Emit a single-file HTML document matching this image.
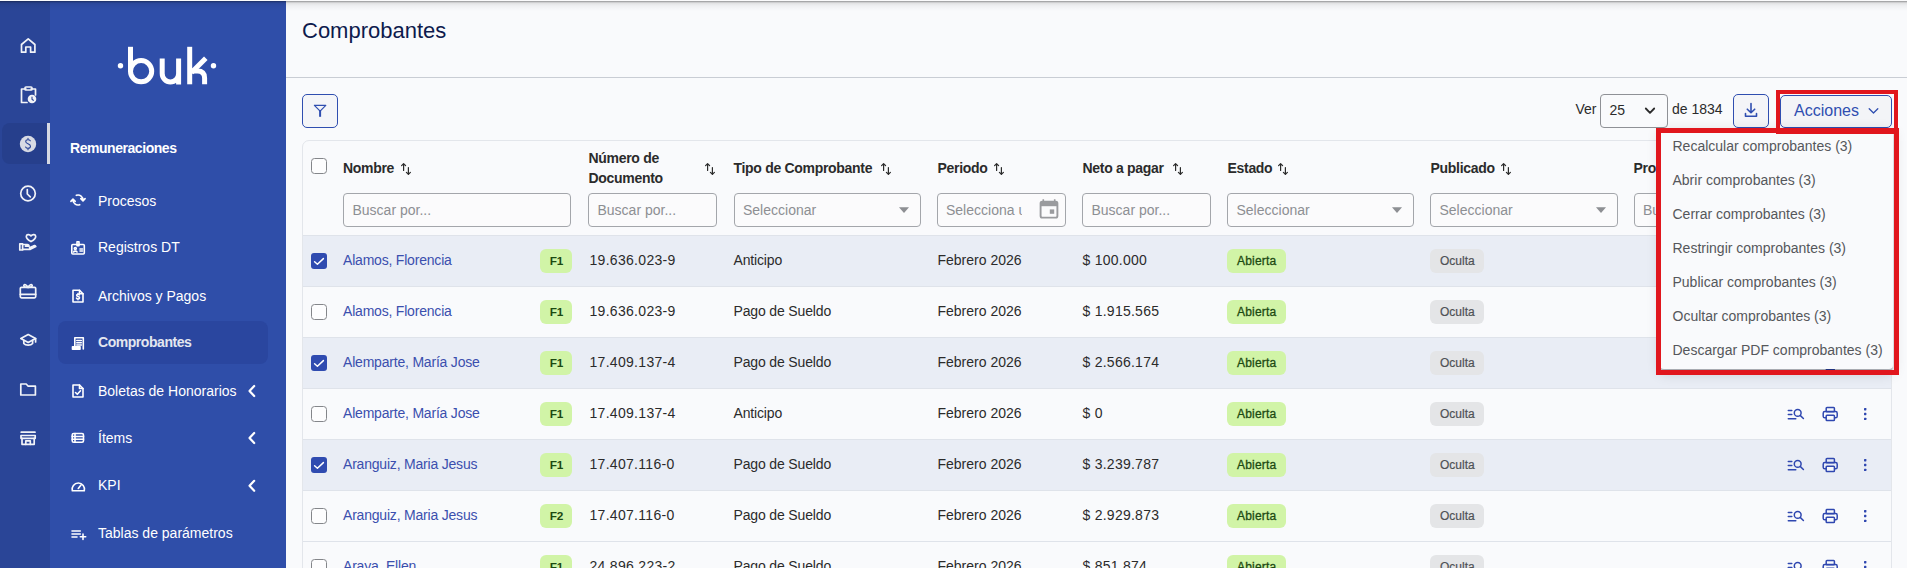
<!DOCTYPE html>
<html><head><meta charset="utf-8">
<style>
*{box-sizing:border-box;margin:0;padding:0}
html,body{width:1907px;height:568px;overflow:hidden}
body{position:relative;background:#f9fafc;font-family:"Liberation Sans",sans-serif;color:#2b2b2b}
.a{position:absolute}
.t{position:absolute;white-space:nowrap;line-height:1}
#rail{left:0;top:0;width:50px;height:568px;background:#2a4597}
#side{left:50px;top:0;width:236px;height:568px;background:#2f4ea9}
#topsh{left:0;top:0;width:1907px;height:12px;background:linear-gradient(to bottom,#fbfbfc 0px,#fbfbfc 0.8px,rgba(0,0,0,.36) 1px,rgba(0,0,0,.3) 2px,rgba(0,0,0,.15) 2.6px,rgba(0,0,0,.09) 3.5px,rgba(0,0,0,.055) 5px,rgba(0,0,0,.03) 7px,rgba(0,0,0,0) 11px)}
.ri{position:absolute;left:20px;width:16px;height:16px}
.si{color:#fff;font-size:14px}
</style></head><body>
<div id="rail" class="a"></div>
<div id="side" class="a"></div>


<!-- rail icons -->
<svg class="a" style="left:0;top:0" width="50" height="568" viewBox="0 0 50 568" fill="none" stroke="#f1f3f8" stroke-width="1.7" stroke-linejoin="round" stroke-linecap="round">
  <!-- home -->
  <path d="M21.5 52.2V44.5L28.2 38.8L34.9 44.5V52.2H30.6V47H25.8V52.2Z"/>
  <!-- clipboard clock -->
  <path d="M26 89H21.5V102.5H27"/><path d="M31 89H35.5V95"/><rect x="25" y="87" width="7" height="3" rx="1"/>
  <circle cx="32" cy="99" r="4.3" fill="#f1f3f8" stroke="none"/><path d="M32 97V99.3L33.3 100.3" stroke="#2a4597" stroke-width="1.1"/>
  <!-- dollar active bg -->
  <path d="M10 123H47V164H10A8 8 0 0 1 2 156V131A8 8 0 0 1 10 123Z" fill="#263f8c" stroke="none"/>
  <rect x="47" y="123" width="3" height="41" fill="#d6d9e2" stroke="none"/>
  <circle cx="28" cy="144" r="8.2" fill="#d8dbe4" stroke="none"/>
  <path d="M30.3 140.8C29.8 140 29 139.7 28 139.7C26.6 139.7 25.7 140.5 25.7 141.6C25.7 144.3 30.5 143.3 30.5 146.3C30.5 147.5 29.4 148.3 28 148.3C26.9 148.3 26 147.8 25.6 147M28 138.2V139.7M28 148.3V149.8" stroke="#2a4597" stroke-width="1.1"/>
  <!-- clock -->
  <circle cx="28" cy="193.5" r="7.3"/><path d="M27.3 189.5V194L30.3 196.8"/>
  <!-- hand heart -->
  <path d="M31 241.6C31 241.6 26.3 238.9 26.3 236.4C26.3 234.5 29.2 233.8 31 235.9C32.8 233.8 35.7 234.5 35.7 236.4C35.7 238.9 31 241.6 31 241.6Z"/>
  <path d="M19.8 243.8H22.6V250H19.8Z"/><path d="M22.6 244.5H27.3C28.4 244.5 29 245.2 29 246.2H25.5M22.6 249.3H30.3L35.8 246.6C35.3 245.6 34.2 245.4 33.3 245.9L29.5 247.7"/>
  <!-- gift -->
  <rect x="20.3" y="287.3" width="15.4" height="10.5" rx="1.2"/><path d="M20.3 294.3H35.7"/><path d="M28 287.5C26.8 284.6 23.8 283.6 23.8 285.6C23.8 287.2 26.3 287.5 28 287.5C29.7 287.5 32.2 287.2 32.2 285.6C32.2 283.6 29.2 284.6 28 287.5Z"/>
  <!-- grad cap -->
  <path d="M20.8 338.5L28.2 334.5L35.6 338.5L28.2 342.5Z"/><path d="M23.8 340.3V343.5C25.5 345.8 30.9 345.8 32.6 343.5V340.3"/><path d="M35.6 338.5V342"/>
  <!-- folder -->
  <path d="M20.8 384H26.2L28.2 386.2H35.4V395H20.8Z"/>
  <!-- store -->
  <path d="M21.2 432.2H35"/><path d="M21 435.5H35.2L35.2 438.3H21Z"/><path d="M22 438.3V444.3H34.2V438.3"/><path d="M25.8 444.3V440.8H30.3V444.3"/>
</svg>

<!-- logo -->
<svg class="a" style="left:50px;top:0" width="236" height="110" viewBox="50 0 236 110" fill="none" stroke="#fff" stroke-width="5">
  <circle cx="120.5" cy="65.8" r="2.7" fill="#fff" stroke="none"/>
  <circle cx="213.5" cy="65.8" r="2.7" fill="#fff" stroke="none"/>
  <path d="M130.5 46.8V72"/><circle cx="141.1" cy="71.2" r="10.6"/>
  <path d="M162.2 58.5V73.5A8.2 8.5 0 0 0 178.6 73.5V58.5M178.6 70V84.5"/>
  <path d="M189.7 46.8V84.3"/><path d="M191.5 72.5L205.8 58.2"/><path d="M191 71H197.5Q204.6 71 204.6 78V84.3"/>
</svg>

<!-- sidebar items -->
<div class="a" style="left:58px;top:321px;width:210px;height:43px;border-radius:8px;background:#2a469f"></div>
<div class="t" style="left:70px;top:141px;font-size:14px;font-weight:bold;color:#fff;letter-spacing:-0.45px">Remuneraciones</div>
<div class="t si" style="left:98px;top:193.5px">Procesos</div>
<div class="t si" style="left:98px;top:240px">Registros DT</div>
<div class="t si" style="left:98px;top:288.5px">Archivos y Pagos</div>
<div class="t si" style="left:98px;top:335.3px;font-weight:bold;color:#e3e6ef;letter-spacing:-0.45px">Comprobantes</div>
<div class="t si" style="left:98px;top:383.5px">Boletas de Honorarios</div>
<div class="t si" style="left:98px;top:431px">Ítems</div>
<div class="t si" style="left:98px;top:478px">KPI</div>
<div class="t si" style="left:98px;top:526px">Tablas de parámetros</div>
<svg class="a" style="left:50px;top:0" width="236" height="568" viewBox="50 0 236 568" fill="none" stroke="#fff" stroke-width="1.6" stroke-linecap="round" stroke-linejoin="round">
  <!-- sync -->
  <path d="M76.3 195.3A5 5 0 0 1 83 200.5M80.8 198.6L83 200.9L85.1 198.6"/>
  <path d="M79.7 204.7A5 5 0 0 1 73 199.5M70.9 201.4L73 199.1L75.2 201.4"/>
  <!-- id badge -->
  <rect x="71.8" y="244.5" width="12.5" height="9.5" rx="1"/><path d="M77 241.8V245.8H79V241.8Z"/><path d="M80 249H82.5M80 251H82.5"/><circle cx="75.3" cy="248.5" r="1"/><path d="M73.6 252C74 250.8 76.6 250.8 77 252"/>
  <!-- file dollar -->
  <path d="M73 290.2H79.5L83 293.7V302H73Z"/><path d="M79.5 290.2V293.7H83"/><path d="M79.3 294.8C79 294.4 78.6 294.2 78 294.2C77.2 294.2 76.7 294.6 76.7 295.3C76.7 296.8 79.5 296.2 79.5 297.8C79.5 298.5 78.8 299 78 299C77.3 299 76.8 298.7 76.5 298.2M78 293.5V294.2M78 299V299.8"/>
  <!-- receipt -->
  <path d="M74.8 349V337.8H83.3V349"/><path d="M76.8 340.5H81.3M76.8 342.8H81.3M76.8 345H81.3"/><path d="M72.5 346.8H80V349.2H72.5Z" fill="#fff"/>
  <!-- file check -->
  <path d="M73 385H79.5L83 388.5V397H73Z"/><path d="M79.5 385V388.5H83"/><path d="M75.5 392.5L77.3 394.3L80.5 390.8"/>
  <!-- list -->
  <rect x="72.2" y="433.5" width="11.3" height="8.8" rx="1.5"/><path d="M72.2 436.5H83.5M72.2 439.3H83.5M75 433.5V442.3"/>
  <!-- gauge -->
  <path d="M72.3 490.8A6.2 6.2 0 1 1 84.3 490.8Z"/><path d="M78.3 488.5L81 485"/>
  <!-- list plus -->
  <path d="M72 531H80.3M72 534H80.3M72 537H77"/><path d="M83 534V539.5M80.3 536.8H85.7"/>
  <!-- chevrons -->
  <path d="M254.2 386L249.5 391L254.2 396" stroke-width="2.2"/>
  <path d="M254.2 433L249.5 438L254.2 443" stroke-width="2.2"/>
  <path d="M254.2 480.8L249.5 485.8L254.2 490.8" stroke-width="2.2"/>
</svg>

<!-- content header -->
<div class="t" style="left:302px;top:20px;font-size:22px;color:#0e1a4d">Comprobantes</div>
<div class="a" style="left:286px;top:77px;width:1621px;height:1px;background:#c9cdd4"></div>










<!-- MAIN START -->
<div class="a" style="left:302px;top:94px;width:36px;height:34px;border:1.3px solid #2f4eb0;border-radius:5px;background:#f4f5f8"></div>
<svg class="a" style="left:302px;top:94px" width="36" height="34" viewBox="302 94 36 34" fill="none" stroke="#2f4eb0" stroke-width="1.5" stroke-linejoin="round"><path d="M314.4 105.3H325.8L320.1 111.2Z" stroke-width="1.2"/><rect x="319.1" y="110.6" width="2" height="6.2" fill="#2f4eb0" stroke="none"/></svg>
<div class="t" style="left:1575.5px;top:102.15px;font-size:14px;color:#2b2b2b;font-weight:normal;">Ver</div>
<div class="a" style="left:1600px;top:94px;width:68px;height:34px;border:1px solid #8f9196;border-radius:4px;background:#f9fafc"></div>
<div class="t" style="left:1609.5px;top:103.15px;font-size:14px;color:#2b2b2b;font-weight:normal;">25</div>
<svg class="a" style="left:1640px;top:100px" width="20" height="20" viewBox="1640 100 20 20" fill="none" stroke="#2b2b2b" stroke-width="1.8" stroke-linecap="round" stroke-linejoin="round"><path d="M1645.8 108.5L1650 112.8L1654.2 108.5"/></svg>
<div class="t" style="left:1672px;top:102.15px;font-size:14px;color:#2b2b2b;font-weight:normal;">de 1834</div>
<div class="a" style="left:1733px;top:94px;width:36px;height:34px;border:1.3px solid #2f4eb0;border-radius:5px;background:#f4f5f8"></div>
<svg class="a" style="left:1733px;top:94px" width="36" height="34" viewBox="1733 94 36 34" fill="none" stroke="#2f4eb0" stroke-width="1.6" stroke-linecap="round" stroke-linejoin="round"><path d="M1751 103.5V112.8M1747.3 109.2L1751 112.8L1754.7 109.2M1745.5 113.5V116.3H1756.5V113.5"/></svg>
<div class="a" style="left:1779.5px;top:94.5px;width:112.5px;height:33px;border:1px solid #2f4eb0;border-radius:5px;background:#f3f4f7"></div>
<div class="t" style="left:1794px;top:102.96px;font-size:16px;color:#2f4eb0;font-weight:normal;">Acciones</div>
<svg class="a" style="left:1860px;top:100px" width="25" height="20" viewBox="1860 100 25 20" fill="none" stroke="#2f4eb0" stroke-width="1.3" stroke-linecap="round" stroke-linejoin="round"><path d="M1869.2 108.8L1873.5 113L1877.8 108.8"/></svg>
<div class="a" style="left:302px;top:140px;width:1590px;height:440px;border:1px solid #e3e6eb;border-radius:7px;background:#f9fafc;overflow:hidden">
</div>
<div class="a" style="left:311px;top:158px;width:16px;height:16px;border:1.2px solid #84868a;border-radius:3.5px;background:#fdfdfe"></div>
<div class="t" style="left:343px;top:161.45px;font-size:14px;color:#2b2b2b;font-weight:bold;letter-spacing:-0.3px">Nombre</div>
<svg class="a" style="left:398.5px;top:161px" width="16" height="16" viewBox="398.5 161 16 16" fill="none" stroke="#2b2b2b" stroke-width="1.2" stroke-linecap="round" stroke-linejoin="round"><path d="M403.1 163.6V170.5M401.1 165.6L403.1 163.6L405.1 165.6"/><path d="M407.9 167.5V174.4M405.9 172.4L407.9 174.4L409.9 172.4"/></svg>
<div class="t" style="left:588.5px;top:150.95px;font-size:14px;color:#2b2b2b;font-weight:bold;letter-spacing:-0.3px">Número de</div>
<div class="t" style="left:588.5px;top:170.95px;font-size:14px;color:#2b2b2b;font-weight:bold;letter-spacing:-0.3px">Documento</div>
<svg class="a" style="left:702.5px;top:161px" width="16" height="16" viewBox="702.5 161 16 16" fill="none" stroke="#2b2b2b" stroke-width="1.2" stroke-linecap="round" stroke-linejoin="round"><path d="M707.1 163.6V170.5M705.1 165.6L707.1 163.6L709.1 165.6"/><path d="M711.9 167.5V174.4M709.9 172.4L711.9 174.4L713.9 172.4"/></svg>
<div class="t" style="left:733.5px;top:161.45px;font-size:14px;color:#2b2b2b;font-weight:bold;letter-spacing:-0.3px">Tipo de Comprobante</div>
<svg class="a" style="left:878.5px;top:161px" width="16" height="16" viewBox="878.5 161 16 16" fill="none" stroke="#2b2b2b" stroke-width="1.2" stroke-linecap="round" stroke-linejoin="round"><path d="M883.1 163.6V170.5M881.1 165.6L883.1 163.6L885.1 165.6"/><path d="M887.9 167.5V174.4M885.9 172.4L887.9 174.4L889.9 172.4"/></svg>
<div class="t" style="left:937.5px;top:161.45px;font-size:14px;color:#2b2b2b;font-weight:bold;letter-spacing:-0.3px">Periodo</div>
<svg class="a" style="left:991.5px;top:161px" width="16" height="16" viewBox="991.5 161 16 16" fill="none" stroke="#2b2b2b" stroke-width="1.2" stroke-linecap="round" stroke-linejoin="round"><path d="M996.1 163.6V170.5M994.1 165.6L996.1 163.6L998.1 165.6"/><path d="M1000.9 167.5V174.4M998.9 172.4L1000.9 174.4L1002.9 172.4"/></svg>
<div class="t" style="left:1082.5px;top:161.45px;font-size:14px;color:#2b2b2b;font-weight:bold;letter-spacing:-0.3px">Neto a pagar</div>
<svg class="a" style="left:1170.5px;top:161px" width="16" height="16" viewBox="1170.5 161 16 16" fill="none" stroke="#2b2b2b" stroke-width="1.2" stroke-linecap="round" stroke-linejoin="round"><path d="M1175.1 163.6V170.5M1173.1 165.6L1175.1 163.6L1177.1 165.6"/><path d="M1179.9 167.5V174.4M1177.9 172.4L1179.9 174.4L1181.9 172.4"/></svg>
<div class="t" style="left:1227.5px;top:161.45px;font-size:14px;color:#2b2b2b;font-weight:bold;letter-spacing:-0.3px">Estado</div>
<svg class="a" style="left:1276px;top:161px" width="16" height="16" viewBox="1276 161 16 16" fill="none" stroke="#2b2b2b" stroke-width="1.2" stroke-linecap="round" stroke-linejoin="round"><path d="M1280.6 163.6V170.5M1278.6 165.6L1280.6 163.6L1282.6 165.6"/><path d="M1285.4 167.5V174.4M1283.4 172.4L1285.4 174.4L1287.4 172.4"/></svg>
<div class="t" style="left:1430.5px;top:161.45px;font-size:14px;color:#2b2b2b;font-weight:bold;letter-spacing:-0.3px">Publicado</div>
<svg class="a" style="left:1498.5px;top:161px" width="16" height="16" viewBox="1498.5 161 16 16" fill="none" stroke="#2b2b2b" stroke-width="1.2" stroke-linecap="round" stroke-linejoin="round"><path d="M1503.1 163.6V170.5M1501.1 165.6L1503.1 163.6L1505.1 165.6"/><path d="M1507.9 167.5V174.4M1505.9 172.4L1507.9 174.4L1509.9 172.4"/></svg>
<div class="t" style="left:1633.5px;top:161.45px;font-size:14px;color:#2b2b2b;font-weight:bold;letter-spacing:-0.3px">Pro</div>
<div class="a" style="left:343px;top:193px;width:228px;height:33.5px;border:1px solid #a3a6ab;border-radius:4px;background:#fbfbfc"></div><div class="t" style="left:352.5px;top:202.85px;font-size:14px;color:#8d8f93;font-weight:normal;">Buscar por...</div>
<div class="a" style="left:588px;top:193px;width:128.5px;height:33.5px;border:1px solid #a3a6ab;border-radius:4px;background:#fbfbfc"></div><div class="t" style="left:597.5px;top:202.85px;font-size:14px;color:#8d8f93;font-weight:normal;">Buscar por...</div>
<div class="a" style="left:733.5px;top:193px;width:187px;height:33.5px;border:1px solid #a3a6ab;border-radius:4px;background:#fbfbfc"></div><div class="t" style="left:743.0px;top:202.85px;font-size:14px;color:#8d8f93;font-weight:normal;">Seleccionar</div><svg class="a" style="left:897.5px;top:204px" width="12" height="12" viewBox="0 0 12 12"><path d="M1 3.3H11L6 9Z" fill="#8d8f93"/></svg>
<div class="a" style="left:937px;top:193px;width:128.5px;height:33.5px;border:1px solid #a3a6ab;border-radius:4px;background:#fbfbfc"></div>
<div class="a" style="left:946px;top:200px;width:76px;height:22px;overflow:hidden"><div class="t" style="left:0px;top:2.85px;font-size:14px;color:#8d8f93;font-weight:normal;">Selecciona una fecha</div></div>
<svg class="a" style="left:1038px;top:198px" width="22" height="22" viewBox="0 0 22 22" fill="none" stroke="#9a9b9e" stroke-width="1.9"><path d="M5.3 1.3V4.5M16.7 1.3V4.5" stroke-width="1.6"/><rect x="2.6" y="3.6" width="16.8" height="16" rx="1.6"/><rect x="2.6" y="3.6" width="16.8" height="4.6" fill="#9a9b9e" stroke="none"/><rect x="11.8" y="11.4" width="4.4" height="4.4" fill="#9a9b9e" stroke="none"/></svg>
<div class="a" style="left:1082px;top:193px;width:128.5px;height:33.5px;border:1px solid #a3a6ab;border-radius:4px;background:#fbfbfc"></div><div class="t" style="left:1091.5px;top:202.85px;font-size:14px;color:#8d8f93;font-weight:normal;">Buscar por...</div>
<div class="a" style="left:1227px;top:193px;width:186.5px;height:33.5px;border:1px solid #a3a6ab;border-radius:4px;background:#fbfbfc"></div><div class="t" style="left:1236.5px;top:202.85px;font-size:14px;color:#8d8f93;font-weight:normal;">Seleccionar</div><svg class="a" style="left:1390.5px;top:204px" width="12" height="12" viewBox="0 0 12 12"><path d="M1 3.3H11L6 9Z" fill="#8d8f93"/></svg>
<div class="a" style="left:1430px;top:193px;width:188px;height:33.5px;border:1px solid #a3a6ab;border-radius:4px;background:#fbfbfc"></div><div class="t" style="left:1439.5px;top:202.85px;font-size:14px;color:#8d8f93;font-weight:normal;">Seleccionar</div><svg class="a" style="left:1595px;top:204px" width="12" height="12" viewBox="0 0 12 12"><path d="M1 3.3H11L6 9Z" fill="#8d8f93"/></svg>
<div class="a" style="left:1633.5px;top:193px;width:60px;height:33.5px;border:1px solid #a3a6ab;border-radius:4px;background:#fbfbfc"></div>
<div class="t" style="left:1643px;top:202.85px;font-size:14px;color:#8d8f93;font-weight:normal;">Bu</div>
<div class="a" style="left:303px;top:235px;width:1588px;height:51px;background:#e9edf5;border-top:1px solid #dfe3ea"></div>
<svg class="a" style="left:311px;top:252.5px" width="16" height="16" viewBox="0 0 16 16"><rect x="0" y="0" width="16" height="16" rx="3" fill="#2f4bb0"/><path d="M3.6 8.8L6.4 11.2L12.4 5.6" fill="none" stroke="#fff" stroke-width="1.5" stroke-linecap="round" stroke-linejoin="round"/></svg>
<div class="t" style="left:343px;top:253.15px;font-size:14px;color:#3b4fae;font-weight:normal;letter-spacing:-0.2px">Alamos, Florencia</div>
<div class="a" style="left:540px;top:248.5px;width:32px;height:24px;border-radius:6px;background:#d1f4a7"></div>
<div class="t" style="left:549.7px;top:255.61px;font-size:11.8px;color:#1d4a12;font-weight:bold;letter-spacing:-0.2px">F1</div>
<div class="t" style="left:589.5px;top:253.15px;font-size:14px;color:#2b2b2b;font-weight:normal;letter-spacing:0.3px">19.636.023-9</div>
<div class="t" style="left:733.5px;top:253.15px;font-size:14px;color:#2b2b2b;font-weight:normal;letter-spacing:-0.15px">Anticipo</div>
<div class="t" style="left:937.5px;top:253.15px;font-size:14px;color:#2b2b2b;font-weight:normal;">Febrero 2026</div>
<div class="t" style="left:1082.5px;top:253.15px;font-size:14px;color:#2b2b2b;font-weight:normal;letter-spacing:0.25px">$ 100.000</div>
<div class="a" style="left:1227px;top:248.9px;width:59px;height:24px;border-radius:6px;background:#d1f4a7"></div>
<div class="t" style="left:1237px;top:255.24px;font-size:12px;color:#1d4a12;font-weight:normal;letter-spacing:0.2px;-webkit-text-stroke:0.3px #1d4a12">Abierta</div>
<div class="a" style="left:1430px;top:248.9px;width:54px;height:24px;border-radius:6px;background:#e4e5e7"></div>
<div class="t" style="left:1440px;top:255.24px;font-size:12px;color:#4f5155;font-weight:normal;-webkit-text-stroke:0.2px #4f5155">Oculta</div>
<svg class="a" style="left:1780px;top:249.0px" width="100" height="24" viewBox="1780 249.0 100 24" fill="none" stroke="#2f47b0" stroke-width="1.5" stroke-linecap="round" stroke-linejoin="round"><path d="M1788.3 257.4H1791.8M1788.3 261.6H1791.8M1788.3 265.7H1795.8"/><circle cx="1797.7" cy="259.9" r="3.4"/><path d="M1800.2 262.4L1803.4 265.5"/><rect x="1826.2" y="254.4" width="8.2" height="4.4" rx="0.8"/><rect x="1823.2" y="258.6" width="14" height="6.2" rx="1.6"/><rect x="1826.2" y="262.2" width="8.2" height="5.4" rx="0.8" fill="#f9fafc"/></svg>
<svg class="a" style="left:1860px;top:249.0px" width="12" height="24" viewBox="0 0 12 24" fill="#2f47b0"><rect x="4" y="6" width="2.4" height="2.4" rx="0.6"/><rect x="4" y="10.8" width="2.4" height="2.4" rx="0.6"/><rect x="4" y="15.7" width="2.4" height="2.4" rx="0.6"/></svg>
<div class="a" style="left:303px;top:286px;width:1588px;height:51px;background:#f9fafc;border-top:1px solid #dfe3ea"></div>
<div class="a" style="left:311px;top:303.5px;width:16px;height:16px;border:1.2px solid #84868a;border-radius:3.5px;background:#fdfdfe"></div>
<div class="t" style="left:343px;top:304.15px;font-size:14px;color:#3b4fae;font-weight:normal;letter-spacing:-0.2px">Alamos, Florencia</div>
<div class="a" style="left:540px;top:299.5px;width:32px;height:24px;border-radius:6px;background:#d1f4a7"></div>
<div class="t" style="left:549.7px;top:306.61px;font-size:11.8px;color:#1d4a12;font-weight:bold;letter-spacing:-0.2px">F1</div>
<div class="t" style="left:589.5px;top:304.15px;font-size:14px;color:#2b2b2b;font-weight:normal;letter-spacing:0.3px">19.636.023-9</div>
<div class="t" style="left:733.5px;top:304.15px;font-size:14px;color:#2b2b2b;font-weight:normal;letter-spacing:-0.15px">Pago de Sueldo</div>
<div class="t" style="left:937.5px;top:304.15px;font-size:14px;color:#2b2b2b;font-weight:normal;">Febrero 2026</div>
<div class="t" style="left:1082.5px;top:304.15px;font-size:14px;color:#2b2b2b;font-weight:normal;letter-spacing:0.25px">$ 1.915.565</div>
<div class="a" style="left:1227px;top:299.9px;width:59px;height:24px;border-radius:6px;background:#d1f4a7"></div>
<div class="t" style="left:1237px;top:306.24px;font-size:12px;color:#1d4a12;font-weight:normal;letter-spacing:0.2px;-webkit-text-stroke:0.3px #1d4a12">Abierta</div>
<div class="a" style="left:1430px;top:299.9px;width:54px;height:24px;border-radius:6px;background:#e4e5e7"></div>
<div class="t" style="left:1440px;top:306.24px;font-size:12px;color:#4f5155;font-weight:normal;-webkit-text-stroke:0.2px #4f5155">Oculta</div>
<svg class="a" style="left:1780px;top:300.0px" width="100" height="24" viewBox="1780 300.0 100 24" fill="none" stroke="#2f47b0" stroke-width="1.5" stroke-linecap="round" stroke-linejoin="round"><path d="M1788.3 308.4H1791.8M1788.3 312.6H1791.8M1788.3 316.7H1795.8"/><circle cx="1797.7" cy="310.9" r="3.4"/><path d="M1800.2 313.4L1803.4 316.5"/><rect x="1826.2" y="305.4" width="8.2" height="4.4" rx="0.8"/><rect x="1823.2" y="309.6" width="14" height="6.2" rx="1.6"/><rect x="1826.2" y="313.2" width="8.2" height="5.4" rx="0.8" fill="#f9fafc"/></svg>
<svg class="a" style="left:1860px;top:300.0px" width="12" height="24" viewBox="0 0 12 24" fill="#2f47b0"><rect x="4" y="6" width="2.4" height="2.4" rx="0.6"/><rect x="4" y="10.8" width="2.4" height="2.4" rx="0.6"/><rect x="4" y="15.7" width="2.4" height="2.4" rx="0.6"/></svg>
<div class="a" style="left:303px;top:337px;width:1588px;height:51px;background:#e9edf5;border-top:1px solid #dfe3ea"></div>
<svg class="a" style="left:311px;top:354.5px" width="16" height="16" viewBox="0 0 16 16"><rect x="0" y="0" width="16" height="16" rx="3" fill="#2f4bb0"/><path d="M3.6 8.8L6.4 11.2L12.4 5.6" fill="none" stroke="#fff" stroke-width="1.5" stroke-linecap="round" stroke-linejoin="round"/></svg>
<div class="t" style="left:343px;top:355.15px;font-size:14px;color:#3b4fae;font-weight:normal;letter-spacing:-0.2px">Alemparte, María Jose</div>
<div class="a" style="left:540px;top:350.5px;width:32px;height:24px;border-radius:6px;background:#d1f4a7"></div>
<div class="t" style="left:549.7px;top:357.61px;font-size:11.8px;color:#1d4a12;font-weight:bold;letter-spacing:-0.2px">F1</div>
<div class="t" style="left:589.5px;top:355.15px;font-size:14px;color:#2b2b2b;font-weight:normal;letter-spacing:0.3px">17.409.137-4</div>
<div class="t" style="left:733.5px;top:355.15px;font-size:14px;color:#2b2b2b;font-weight:normal;letter-spacing:-0.15px">Pago de Sueldo</div>
<div class="t" style="left:937.5px;top:355.15px;font-size:14px;color:#2b2b2b;font-weight:normal;">Febrero 2026</div>
<div class="t" style="left:1082.5px;top:355.15px;font-size:14px;color:#2b2b2b;font-weight:normal;letter-spacing:0.25px">$ 2.566.174</div>
<div class="a" style="left:1227px;top:350.9px;width:59px;height:24px;border-radius:6px;background:#d1f4a7"></div>
<div class="t" style="left:1237px;top:357.24px;font-size:12px;color:#1d4a12;font-weight:normal;letter-spacing:0.2px;-webkit-text-stroke:0.3px #1d4a12">Abierta</div>
<div class="a" style="left:1430px;top:350.9px;width:54px;height:24px;border-radius:6px;background:#e4e5e7"></div>
<div class="t" style="left:1440px;top:357.24px;font-size:12px;color:#4f5155;font-weight:normal;-webkit-text-stroke:0.2px #4f5155">Oculta</div>
<svg class="a" style="left:1780px;top:351.0px" width="100" height="24" viewBox="1780 351.0 100 24" fill="none" stroke="#2f47b0" stroke-width="1.5" stroke-linecap="round" stroke-linejoin="round"><path d="M1788.3 359.4H1791.8M1788.3 363.6H1791.8M1788.3 367.7H1795.8"/><circle cx="1797.7" cy="361.9" r="3.4"/><path d="M1800.2 364.4L1803.4 367.5"/><rect x="1826.2" y="356.4" width="8.2" height="4.4" rx="0.8"/><rect x="1823.2" y="360.6" width="14" height="6.2" rx="1.6"/><rect x="1826.2" y="364.2" width="8.2" height="5.4" rx="0.8" fill="#f9fafc"/></svg>
<svg class="a" style="left:1860px;top:351.0px" width="12" height="24" viewBox="0 0 12 24" fill="#2f47b0"><rect x="4" y="6" width="2.4" height="2.4" rx="0.6"/><rect x="4" y="10.8" width="2.4" height="2.4" rx="0.6"/><rect x="4" y="15.7" width="2.4" height="2.4" rx="0.6"/></svg>
<div class="a" style="left:303px;top:388px;width:1588px;height:51px;background:#f9fafc;border-top:1px solid #dfe3ea"></div>
<div class="a" style="left:311px;top:405.5px;width:16px;height:16px;border:1.2px solid #84868a;border-radius:3.5px;background:#fdfdfe"></div>
<div class="t" style="left:343px;top:406.15px;font-size:14px;color:#3b4fae;font-weight:normal;letter-spacing:-0.2px">Alemparte, María Jose</div>
<div class="a" style="left:540px;top:401.5px;width:32px;height:24px;border-radius:6px;background:#d1f4a7"></div>
<div class="t" style="left:549.7px;top:408.61px;font-size:11.8px;color:#1d4a12;font-weight:bold;letter-spacing:-0.2px">F1</div>
<div class="t" style="left:589.5px;top:406.15px;font-size:14px;color:#2b2b2b;font-weight:normal;letter-spacing:0.3px">17.409.137-4</div>
<div class="t" style="left:733.5px;top:406.15px;font-size:14px;color:#2b2b2b;font-weight:normal;letter-spacing:-0.15px">Anticipo</div>
<div class="t" style="left:937.5px;top:406.15px;font-size:14px;color:#2b2b2b;font-weight:normal;">Febrero 2026</div>
<div class="t" style="left:1082.5px;top:406.15px;font-size:14px;color:#2b2b2b;font-weight:normal;letter-spacing:0.25px">$ 0</div>
<div class="a" style="left:1227px;top:401.9px;width:59px;height:24px;border-radius:6px;background:#d1f4a7"></div>
<div class="t" style="left:1237px;top:408.24px;font-size:12px;color:#1d4a12;font-weight:normal;letter-spacing:0.2px;-webkit-text-stroke:0.3px #1d4a12">Abierta</div>
<div class="a" style="left:1430px;top:401.9px;width:54px;height:24px;border-radius:6px;background:#e4e5e7"></div>
<div class="t" style="left:1440px;top:408.24px;font-size:12px;color:#4f5155;font-weight:normal;-webkit-text-stroke:0.2px #4f5155">Oculta</div>
<svg class="a" style="left:1780px;top:402.0px" width="100" height="24" viewBox="1780 402.0 100 24" fill="none" stroke="#2f47b0" stroke-width="1.5" stroke-linecap="round" stroke-linejoin="round"><path d="M1788.3 410.4H1791.8M1788.3 414.6H1791.8M1788.3 418.7H1795.8"/><circle cx="1797.7" cy="412.9" r="3.4"/><path d="M1800.2 415.4L1803.4 418.5"/><rect x="1826.2" y="407.4" width="8.2" height="4.4" rx="0.8"/><rect x="1823.2" y="411.6" width="14" height="6.2" rx="1.6"/><rect x="1826.2" y="415.2" width="8.2" height="5.4" rx="0.8" fill="#f9fafc"/></svg>
<svg class="a" style="left:1860px;top:402.0px" width="12" height="24" viewBox="0 0 12 24" fill="#2f47b0"><rect x="4" y="6" width="2.4" height="2.4" rx="0.6"/><rect x="4" y="10.8" width="2.4" height="2.4" rx="0.6"/><rect x="4" y="15.7" width="2.4" height="2.4" rx="0.6"/></svg>
<div class="a" style="left:303px;top:439px;width:1588px;height:51px;background:#e9edf5;border-top:1px solid #dfe3ea"></div>
<svg class="a" style="left:311px;top:456.5px" width="16" height="16" viewBox="0 0 16 16"><rect x="0" y="0" width="16" height="16" rx="3" fill="#2f4bb0"/><path d="M3.6 8.8L6.4 11.2L12.4 5.6" fill="none" stroke="#fff" stroke-width="1.5" stroke-linecap="round" stroke-linejoin="round"/></svg>
<div class="t" style="left:343px;top:457.15px;font-size:14px;color:#3b4fae;font-weight:normal;letter-spacing:-0.2px">Aranguiz, Maria Jesus</div>
<div class="a" style="left:540px;top:452.5px;width:32px;height:24px;border-radius:6px;background:#d1f4a7"></div>
<div class="t" style="left:549.7px;top:459.61px;font-size:11.8px;color:#1d4a12;font-weight:bold;letter-spacing:-0.2px">F1</div>
<div class="t" style="left:589.5px;top:457.15px;font-size:14px;color:#2b2b2b;font-weight:normal;letter-spacing:0.3px">17.407.116-0</div>
<div class="t" style="left:733.5px;top:457.15px;font-size:14px;color:#2b2b2b;font-weight:normal;letter-spacing:-0.15px">Pago de Sueldo</div>
<div class="t" style="left:937.5px;top:457.15px;font-size:14px;color:#2b2b2b;font-weight:normal;">Febrero 2026</div>
<div class="t" style="left:1082.5px;top:457.15px;font-size:14px;color:#2b2b2b;font-weight:normal;letter-spacing:0.25px">$ 3.239.787</div>
<div class="a" style="left:1227px;top:452.9px;width:59px;height:24px;border-radius:6px;background:#d1f4a7"></div>
<div class="t" style="left:1237px;top:459.24px;font-size:12px;color:#1d4a12;font-weight:normal;letter-spacing:0.2px;-webkit-text-stroke:0.3px #1d4a12">Abierta</div>
<div class="a" style="left:1430px;top:452.9px;width:54px;height:24px;border-radius:6px;background:#e4e5e7"></div>
<div class="t" style="left:1440px;top:459.24px;font-size:12px;color:#4f5155;font-weight:normal;-webkit-text-stroke:0.2px #4f5155">Oculta</div>
<svg class="a" style="left:1780px;top:453.0px" width="100" height="24" viewBox="1780 453.0 100 24" fill="none" stroke="#2f47b0" stroke-width="1.5" stroke-linecap="round" stroke-linejoin="round"><path d="M1788.3 461.4H1791.8M1788.3 465.6H1791.8M1788.3 469.7H1795.8"/><circle cx="1797.7" cy="463.9" r="3.4"/><path d="M1800.2 466.4L1803.4 469.5"/><rect x="1826.2" y="458.4" width="8.2" height="4.4" rx="0.8"/><rect x="1823.2" y="462.6" width="14" height="6.2" rx="1.6"/><rect x="1826.2" y="466.2" width="8.2" height="5.4" rx="0.8" fill="#f9fafc"/></svg>
<svg class="a" style="left:1860px;top:453.0px" width="12" height="24" viewBox="0 0 12 24" fill="#2f47b0"><rect x="4" y="6" width="2.4" height="2.4" rx="0.6"/><rect x="4" y="10.8" width="2.4" height="2.4" rx="0.6"/><rect x="4" y="15.7" width="2.4" height="2.4" rx="0.6"/></svg>
<div class="a" style="left:303px;top:490px;width:1588px;height:51px;background:#f9fafc;border-top:1px solid #dfe3ea"></div>
<div class="a" style="left:311px;top:507.5px;width:16px;height:16px;border:1.2px solid #84868a;border-radius:3.5px;background:#fdfdfe"></div>
<div class="t" style="left:343px;top:508.15px;font-size:14px;color:#3b4fae;font-weight:normal;letter-spacing:-0.2px">Aranguiz, Maria Jesus</div>
<div class="a" style="left:540px;top:503.5px;width:32px;height:24px;border-radius:6px;background:#d1f4a7"></div>
<div class="t" style="left:549.7px;top:510.61px;font-size:11.8px;color:#1d4a12;font-weight:bold;letter-spacing:-0.2px">F2</div>
<div class="t" style="left:589.5px;top:508.15px;font-size:14px;color:#2b2b2b;font-weight:normal;letter-spacing:0.3px">17.407.116-0</div>
<div class="t" style="left:733.5px;top:508.15px;font-size:14px;color:#2b2b2b;font-weight:normal;letter-spacing:-0.15px">Pago de Sueldo</div>
<div class="t" style="left:937.5px;top:508.15px;font-size:14px;color:#2b2b2b;font-weight:normal;">Febrero 2026</div>
<div class="t" style="left:1082.5px;top:508.15px;font-size:14px;color:#2b2b2b;font-weight:normal;letter-spacing:0.25px">$ 2.929.873</div>
<div class="a" style="left:1227px;top:503.9px;width:59px;height:24px;border-radius:6px;background:#d1f4a7"></div>
<div class="t" style="left:1237px;top:510.24px;font-size:12px;color:#1d4a12;font-weight:normal;letter-spacing:0.2px;-webkit-text-stroke:0.3px #1d4a12">Abierta</div>
<div class="a" style="left:1430px;top:503.9px;width:54px;height:24px;border-radius:6px;background:#e4e5e7"></div>
<div class="t" style="left:1440px;top:510.24px;font-size:12px;color:#4f5155;font-weight:normal;-webkit-text-stroke:0.2px #4f5155">Oculta</div>
<svg class="a" style="left:1780px;top:504.0px" width="100" height="24" viewBox="1780 504.0 100 24" fill="none" stroke="#2f47b0" stroke-width="1.5" stroke-linecap="round" stroke-linejoin="round"><path d="M1788.3 512.4H1791.8M1788.3 516.6H1791.8M1788.3 520.7H1795.8"/><circle cx="1797.7" cy="514.9" r="3.4"/><path d="M1800.2 517.4L1803.4 520.5"/><rect x="1826.2" y="509.4" width="8.2" height="4.4" rx="0.8"/><rect x="1823.2" y="513.6" width="14" height="6.2" rx="1.6"/><rect x="1826.2" y="517.2" width="8.2" height="5.4" rx="0.8" fill="#f9fafc"/></svg>
<svg class="a" style="left:1860px;top:504.0px" width="12" height="24" viewBox="0 0 12 24" fill="#2f47b0"><rect x="4" y="6" width="2.4" height="2.4" rx="0.6"/><rect x="4" y="10.8" width="2.4" height="2.4" rx="0.6"/><rect x="4" y="15.7" width="2.4" height="2.4" rx="0.6"/></svg>
<div class="a" style="left:303px;top:541px;width:1588px;height:51px;background:#f9fafc;border-top:1px solid #dfe3ea"></div>
<div class="a" style="left:311px;top:558.5px;width:16px;height:16px;border:1.2px solid #84868a;border-radius:3.5px;background:#fdfdfe"></div>
<div class="t" style="left:343px;top:559.15px;font-size:14px;color:#3b4fae;font-weight:normal;letter-spacing:-0.2px">Araya, Ellen</div>
<div class="a" style="left:540px;top:554.5px;width:32px;height:24px;border-radius:6px;background:#d1f4a7"></div>
<div class="t" style="left:549.7px;top:561.61px;font-size:11.8px;color:#1d4a12;font-weight:bold;letter-spacing:-0.2px">F1</div>
<div class="t" style="left:589.5px;top:559.15px;font-size:14px;color:#2b2b2b;font-weight:normal;letter-spacing:0.3px">24.896.223-2</div>
<div class="t" style="left:733.5px;top:559.15px;font-size:14px;color:#2b2b2b;font-weight:normal;letter-spacing:-0.15px">Pago de Sueldo</div>
<div class="t" style="left:937.5px;top:559.15px;font-size:14px;color:#2b2b2b;font-weight:normal;">Febrero 2026</div>
<div class="t" style="left:1082.5px;top:559.15px;font-size:14px;color:#2b2b2b;font-weight:normal;letter-spacing:0.25px">$ 851.874</div>
<div class="a" style="left:1227px;top:554.9px;width:59px;height:24px;border-radius:6px;background:#d1f4a7"></div>
<div class="t" style="left:1237px;top:561.24px;font-size:12px;color:#1d4a12;font-weight:normal;letter-spacing:0.2px;-webkit-text-stroke:0.3px #1d4a12">Abierta</div>
<div class="a" style="left:1430px;top:554.9px;width:54px;height:24px;border-radius:6px;background:#e4e5e7"></div>
<div class="t" style="left:1440px;top:561.24px;font-size:12px;color:#4f5155;font-weight:normal;-webkit-text-stroke:0.2px #4f5155">Oculta</div>
<svg class="a" style="left:1780px;top:555.0px" width="100" height="24" viewBox="1780 555.0 100 24" fill="none" stroke="#2f47b0" stroke-width="1.5" stroke-linecap="round" stroke-linejoin="round"><path d="M1788.3 563.4H1791.8M1788.3 567.6H1791.8M1788.3 571.7H1795.8"/><circle cx="1797.7" cy="565.9" r="3.4"/><path d="M1800.2 568.4L1803.4 571.5"/><rect x="1826.2" y="560.4" width="8.2" height="4.4" rx="0.8"/><rect x="1823.2" y="564.6" width="14" height="6.2" rx="1.6"/><rect x="1826.2" y="568.2" width="8.2" height="5.4" rx="0.8" fill="#f9fafc"/></svg>
<svg class="a" style="left:1860px;top:555.0px" width="12" height="24" viewBox="0 0 12 24" fill="#2f47b0"><rect x="4" y="6" width="2.4" height="2.4" rx="0.6"/><rect x="4" y="10.8" width="2.4" height="2.4" rx="0.6"/><rect x="4" y="15.7" width="2.4" height="2.4" rx="0.6"/></svg>
<div class="a" style="left:1660px;top:128px;width:233px;height:241px;background:#f9fafc;border-radius:0 0 4px 4px;box-shadow:0 2px 2px rgba(0,0,0,.2),0 4px 14px rgba(0,0,0,.16)"></div>
<div class="t" style="left:1672.5px;top:139.15px;font-size:14px;color:#55575b;font-weight:normal;">Recalcular comprobantes (3)</div>
<div class="t" style="left:1672.5px;top:173.15px;font-size:14px;color:#55575b;font-weight:normal;">Abrir comprobantes (3)</div>
<div class="t" style="left:1672.5px;top:207.15px;font-size:14px;color:#55575b;font-weight:normal;">Cerrar comprobantes (3)</div>
<div class="t" style="left:1672.5px;top:241.15px;font-size:14px;color:#55575b;font-weight:normal;">Restringir comprobantes (3)</div>
<div class="t" style="left:1672.5px;top:275.15px;font-size:14px;color:#55575b;font-weight:normal;">Publicar comprobantes (3)</div>
<div class="t" style="left:1672.5px;top:309.15px;font-size:14px;color:#55575b;font-weight:normal;">Ocultar comprobantes (3)</div>
<div class="t" style="left:1672.5px;top:343.15px;font-size:14px;color:#55575b;font-weight:normal;">Descargar PDF comprobantes (3)</div>
<div class="a" style="left:1775.5px;top:90px;width:122.5px;height:43.5px;border:4.6px solid #e1161d"></div>
<div class="a" style="left:1656px;top:128px;width:243px;height:247px;border:5px solid #e1161d"></div>
<!-- MAIN END -->
<div id="topsh" class="a"></div>
</body></html>
